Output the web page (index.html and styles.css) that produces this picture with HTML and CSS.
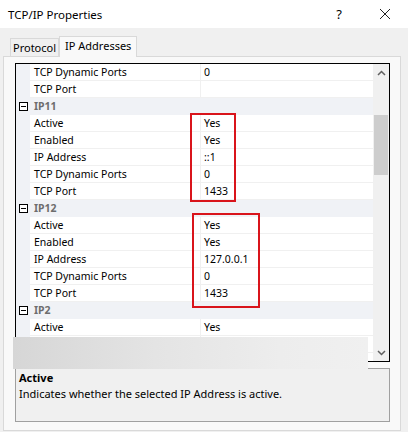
FILE: index.html
```html
<!DOCTYPE html>
<html lang="en">
<head>
	<meta charset="UTF-8">
	<title>TCP/IP Properties</title>
	<link rel="stylesheet" href="styles.css">
</head>
<body>
	<div class="titlebar">
		<span class="title">TCP/IP Properties</span>
		<span class="btn help">?</span>
		<span class="btn close">
			<svg width="12" height="12" viewBox="0 0 12 12"><path d="M1 1L11 11M11 1L1 11" stroke="#222" stroke-width="1"/></svg>
		</span>
	</div>
	<div class="tabs">
		<div class="tab">Protocol</div>
		<div class="tab active">IP Addresses</div>
	</div>
	<div class="panel">
		<div class="grid">
			<ul class="rows">
				<li class="row"><span class="gutter"></span><span class="name">TCP Dynamic Ports</span><span class="value">0</span></li>
				<li class="row"><span class="gutter"></span><span class="name">TCP Port</span><span class="value"></span></li>
				<li class="row cat"><span class="gutter"><i class="minus"></i></span><span class="name">IP11</span></li>
				<li class="row"><span class="gutter"></span><span class="name">Active</span><span class="value">Yes</span></li>
				<li class="row"><span class="gutter"></span><span class="name">Enabled</span><span class="value">Yes</span></li>
				<li class="row"><span class="gutter"></span><span class="name">IP Address</span><span class="value">::1</span></li>
				<li class="row"><span class="gutter"></span><span class="name">TCP Dynamic Ports</span><span class="value">0</span></li>
				<li class="row"><span class="gutter"></span><span class="name">TCP Port</span><span class="value">1433</span></li>
				<li class="row cat"><span class="gutter"><i class="minus"></i></span><span class="name">IP12</span></li>
				<li class="row"><span class="gutter"></span><span class="name">Active</span><span class="value">Yes</span></li>
				<li class="row"><span class="gutter"></span><span class="name">Enabled</span><span class="value">Yes</span></li>
				<li class="row"><span class="gutter"></span><span class="name">IP Address</span><span class="value">127.0.0.1</span></li>
				<li class="row"><span class="gutter"></span><span class="name">TCP Dynamic Ports</span><span class="value">0</span></li>
				<li class="row"><span class="gutter"></span><span class="name">TCP Port</span><span class="value">1433</span></li>
				<li class="row cat"><span class="gutter"><i class="minus"></i></span><span class="name">IP2</span></li>
				<li class="row"><span class="gutter"></span><span class="name">Active</span><span class="value">Yes</span></li>
				<li class="row"><span class="gutter"></span><span class="name">Enabled</span><span class="value">Yes</span></li>
			</ul>
			<div class="scrollbar">
				<span class="arrow"><svg width="9" height="6" viewBox="0 0 9 6"><path d="M1 5L4.5 1.5L8 5" fill="none" stroke="#606060" stroke-width="1.5"/></svg></span>
				<span class="track"><span class="thumb"></span></span>
				<span class="arrow"><svg width="9" height="6" viewBox="0 0 9 6"><path d="M1 1L4.5 4.5L8 1" fill="none" stroke="#606060" stroke-width="1.5"/></svg></span>
			</div>
		</div>
		<div class="desc">
			<b>Active</b>
			<p>Indicates whether the selected IP Address is active.</p>
		</div>
		<div class="mark mark1"></div>
		<div class="mark mark2"></div>
		<div class="blur"></div>
	</div>
</body>
</html>
```
FILE: styles.css
```css
*{margin: 0; padding: 0; box-sizing: border-box;}
ul, li{list-style: none;}
body{background: #f0f0f0; font-family: "Noto Sans", "Open Sans", sans-serif; font-size: 10.5px; color: #000; width: 408px; height: 432px; overflow: hidden;}

.titlebar{display: flex; align-items: center; height: 28px; background: #fff; padding-left: 8px;}
.title{flex: 1; font-size: 11.5px;}
.btn{width: 46px; display: flex; justify-content: center; font-size: 13px;}

.tabs{display: flex; align-items: flex-end; height: 28px; padding-left: 10px;}
.tab{height: 18px; line-height: 17px; padding: 0 2px; border: 1px solid #d9d9d9; border-bottom: none; background: #f0f0f0; font-size: 11px;}
.tab.active{height: 21px; line-height: 17px; padding: 0 5px; background: #f9f9f9; margin-bottom: -1px; position: relative; z-index: 1;}

.panel{position: relative; margin: 0 7px 0 3px; height: 375px; border: 1px solid #d9d9d9; background: #f9f9f9; padding: 6px 10px 0 11px;}

.grid{display: flex; height: 299px; border: 1px solid #000; background: #fff; overflow: hidden;}
.rows{flex: 1;}
.row{display: flex; height: 17px; line-height: 16px;}
.gutter{width: 14px; background: #f0f2f6; display: flex; align-items: center; justify-content: center;}
.name{width: 170px; padding-left: 4px; border-bottom: 1px solid #f0f0f0;}
.value{flex: 1; padding-left: 3px; border-left: 1px solid #f0f0f0; border-bottom: 1px solid #f0f0f0;}
.cat{background: #f0f2f6;}
.cat .name{flex: 1; font-weight: bold; color: #6d6d6d; border-bottom: none;}
.minus{display: block; width: 9px; height: 9px; border: 1px solid #000; background: #fff; position: relative;}
.minus:after{content: ""; position: absolute; left: 1px; top: 3px; width: 5px; height: 1px; background: #000;}

.scrollbar{width: 16px; display: flex; flex-direction: column; background: #f0f0f0;}
.arrow{height: 17px; display: flex; align-items: center; justify-content: center;}
.track{flex: 1; padding-top: 34px;}
.thumb{display: block; margin: 0 1px; height: 60px; background: #cdcdcd;}

.desc{margin-top: 6px; height: 54px; border: 1px solid #a0a0a0; background: #f0f0f0; padding: 1px 3px;}
.desc b{display: block; line-height: 16px; font-size: 11px;}
.desc p{line-height: 16px; font-size: 11px;}

.mark{position: absolute; border: 2px solid #d9141b;}
.mark1{left: 186px; top: 56px; width: 46px; height: 89px;}
.mark2{left: 188px; top: 156px; width: 68px; height: 95px;}

.blur{position: absolute; left: 9px; top: 280px; width: 355px; height: 32px; background: linear-gradient(to right, #d6d6d6, #e4e4e4 40%, #ededed 75%, #f0f0f0);}
```
